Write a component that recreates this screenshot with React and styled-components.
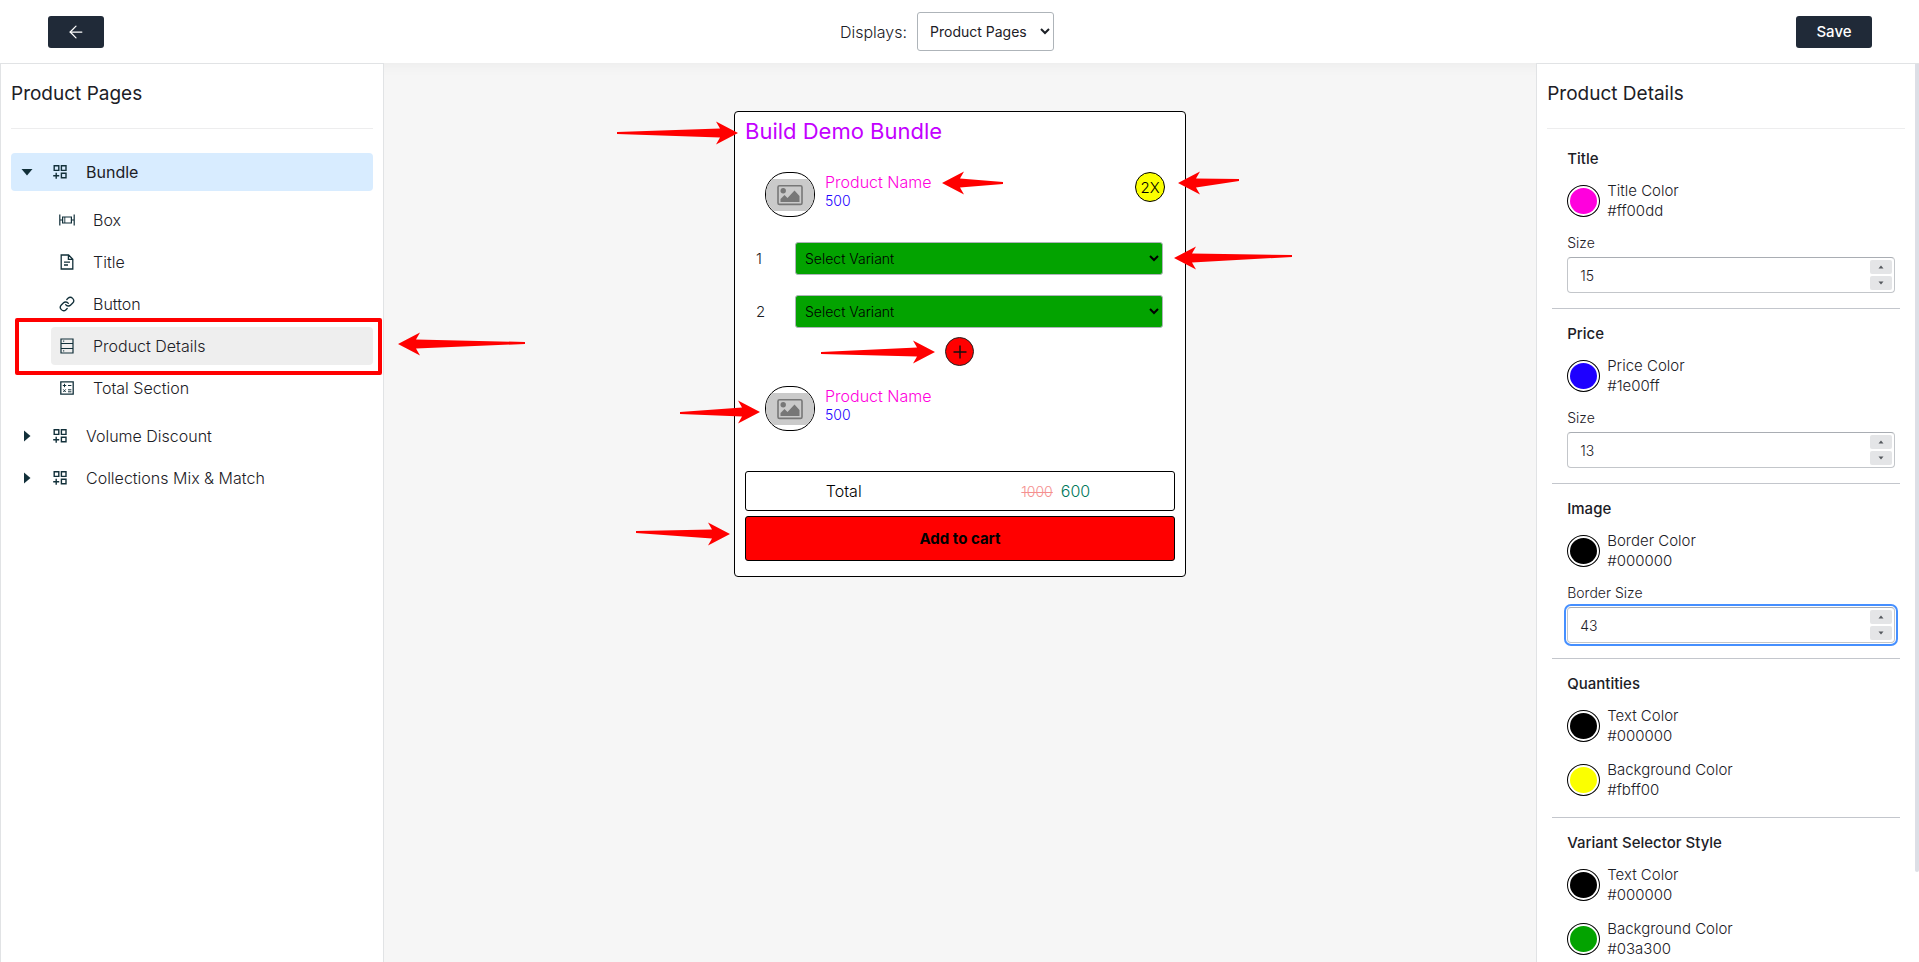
import React, { useId, useState } from "react";
import styled, { createGlobalStyle, css } from "styled-components";
import { ArrowLeft, Link as LinkIcon } from "lucide-react";

const ink = "#202a38";
const textInk = "#1c2026";
const iconInk = "#12303a";
const line = "#e1e3e5";
const red = "#ff0000";

const GlobalStyle = createGlobalStyle`
  *, *::before, *::after { box-sizing: border-box; }
  body {
    margin: 0;
    background: #f6f6f6;
    color: ${textInk};
    font-family: Inter, "Open Sans", sans-serif;
    font-size: 15px;
    font-weight: 300;
  }
  button, input, select { font: inherit; color: inherit; }
  h1, h2, h3, p, ul { margin: 0; padding: 0; }
  ul { list-style: none; }
`;

const Page = styled.div`
  display: flex;
  flex-direction: column;
  height: 100vh;
`;

const TopBar = styled.header`
  position: relative;
  display: flex;
  align-items: center;
  justify-content: space-between;
  padding: 12px 47px 12px 48px;
  background: #fff;
  box-shadow: 0 0 16px rgba(0, 0, 0, 0.06);
`;

const DarkButton = styled.button`
  display: flex;
  align-items: center;
  justify-content: center;
  width: ${(p) => (p.$wide ? "76px" : "56px")};
  height: 32px;
  padding: 0;
  border: 0;
  border-radius: 3px;
  background: ${ink};
  color: #fff;
  font-size: 15px;
  font-weight: 500;
`;

const DisplayPicker = styled.div`
  display: flex;
  align-items: center;
  gap: 10px;
  margin-right: 6px;
  font-size: 16px;
`;

const DisplaySelect = styled.select`
  width: 137px;
  height: 39px;
  padding: 0 0 0 8px;
  border: 1px solid #aeb4b9;
  border-radius: 3px;
  background: #fff;
  font-size: 14px;
  font-weight: 400;
`;

const Workspace = styled.div`
  position: relative;
  flex: 1;
  min-height: 0;
  display: grid;
  grid-template-columns: 20% 1fr calc(20% - 1px);
`;

const Panel = styled.aside`
  position: relative;
  min-height: 0;
  padding: 16px 10px 0;
  border: 1px solid ${line};
  border-bottom: 0;
  background: #fff;
`;

const SettingsPanel = styled(Panel)`
  display: flex;
  padding: 0;
  border-right: 0;
`;

const SettingsScroll = styled.div`
  flex: 1;
  overflow-y: auto;
  padding: 16px 10px 100px;
  scrollbar-width: none;
`;

const ScrollThumb = styled.div`
  flex: none;
  width: 4px;
  height: 90%;
  border-radius: 0 0 2px 2px;
  background: #dddfe6;
`;

const PanelTitle = styled.h2`
  padding-bottom: 20px;
  border-bottom: 1px solid #ededee;
  font-size: 19px;
  font-weight: 400;
  line-height: 28px;
`;

const NavList = styled.ul`
  display: flex;
  flex-direction: column;
  gap: 4px;
  padding-top: 24px;
`;

const SubList = styled.ul`
  display: flex;
  flex-direction: column;
  gap: 4px;
  padding: 10px 0 6px 40px;
`;

const NavItem = styled.li`
  position: relative;
`;

const NavButton = styled.button`
  display: flex;
  align-items: center;
  width: 100%;
  height: 38px;
  padding: 0 0 0 ${(p) => (p.$sub ? "8px" : "9px")};
  border: 0;
  border-radius: 4px;
  background: ${(p) => p.$fill || "transparent"};
  font-size: 16px;
  font-weight: ${(p) => (p.$strong ? 400 : 300)};
  text-align: left;
`;

const IconSlot = styled.span`
  display: flex;
  align-items: center;
  justify-content: center;
  width: ${(p) => p.$width};
  margin-right: ${(p) => p.$after};
  color: ${iconInk};
`;

const Highlight = styled.div`
  position: absolute;
  inset: -9px -9px -10px -36px;
  border: 4px solid ${red};
  border-radius: 2px;
  pointer-events: none;
`;

const Canvas = styled.main`
  display: flex;
  justify-content: center;
  align-items: flex-start;
  padding-top: 48px;
`;

const Card = styled.section`
  position: relative;
  width: 452px;
  padding: 5px 10px 15px;
  border: 1px solid #000;
  border-radius: 4px;
  background: #fff;
`;

const CardTitle = styled.h1`
  position: relative;
  color: #c300ff;
  font-size: 22px;
  font-weight: 400;
  line-height: 28px;
`;

const ProductRow = styled.div`
  position: relative;
  display: flex;
  align-items: flex-start;
  gap: 10px;
  padding: 0 10px 0 20px;
  margin-top: ${(p) => p.$gap};
`;

const Thumb = styled.div`
  display: flex;
  align-items: center;
  width: 50px;
  height: 45px;
  overflow: hidden;
  border: 1px solid #000;
  border-radius: 22px;
  background: #fff;
`;

const ProductText = styled.div`
  flex: 1;
  color: #ff00dd;
  font-size: 16px;
  line-height: 20px;
`;

const ProductName = styled.span`
  position: relative;
`;

const Price = styled.p`
  color: #1e00ff;
  font-size: 14px;
  line-height: 18px;
`;

const Quantity = styled.div`
  position: relative;
  display: flex;
  align-items: center;
  justify-content: center;
  width: 30px;
  height: 30px;
  border: 1px solid #000;
  border-radius: 50%;
  background: #fbff00;
  color: #000;
  font-size: 15px;
`;

const VariantList = styled.div`
  display: flex;
  flex-direction: column;
  gap: 20px;
  padding: 25px 12px 9px 11px;
`;

const VariantRow = styled.div`
  position: relative;
  display: flex;
  align-items: center;
`;

const VariantLabel = styled.label`
  width: 39px;
`;

const VariantSelect = styled.select`
  flex: 1;
  height: 33px;
  padding: 0 0 0 5px;
  border: 1px solid #aeb4b9;
  border-radius: 3px;
  background: #03a300;
  color: #000;
  font-size: 14px;
`;

const PlusRow = styled.div`
  display: flex;
  justify-content: center;
  padding-right: 1px;
`;

const PlusBadge = styled.div`
  position: relative;
  display: flex;
  align-items: center;
  justify-content: center;
  width: 29px;
  height: 29px;
  border: 1px solid #222;
  border-radius: 50%;
  background: ${red};
`;

const TotalBox = styled.div`
  display: flex;
  align-items: center;
  justify-content: space-around;
  height: 40px;
  margin-top: 40px;
  border: 1px solid #000;
  border-radius: 3px;
  color: #000;
  font-size: 16px;
`;

const TotalPrices = styled.div`
  display: flex;
  align-items: center;
  gap: 8px;
  padding-right: 4px;
  color: #00795c;
`;

const OldPrice = styled.del`
  color: #f58f8f;
  font-size: 14px;
`;

const CartButton = styled.button`
  position: relative;
  display: block;
  width: 100%;
  height: 45px;
  margin-top: 5px;
  border: 1px solid #000;
  border-radius: 3px;
  background: ${red};
  color: #000;
  font-size: 15px;
  font-weight: 700;
`;

const Section = styled.section`
  display: flex;
  flex-direction: column;
  margin: 0 5px;
  padding: ${(p) => (p.$first ? "18px" : "13px")} 5px 15px 15px;
  border-bottom: 1px solid #c3c6cc;
`;

const SectionTitle = styled.h3`
  margin-bottom: 10px;
  font-size: 15px;
  font-weight: 500;
  line-height: 24px;
`;

const ColorField = styled.div`
  display: flex;
  align-items: center;
  gap: 7px;
  margin-bottom: 2px;

  & + & { margin-top: 12px; }
`;

const ColorLabel = styled.label`
  display: flex;
  flex-direction: column;
  font-size: 15px;
  line-height: 20px;
`;

const Swatch = styled.input`
  appearance: none;
  width: 33px;
  height: 32px;
  padding: 2px;
  border: 1px solid #000;
  border-radius: 50%;
  background: #fff;

  &::-webkit-color-swatch-wrapper { padding: 0; }
  &::-webkit-color-swatch { border: 0; border-radius: 50%; }
`;

const SizeLabel = styled.label`
  margin: 12px 0 6px;
  font-size: 14px;
  line-height: 16px;
`;

const NumberBox = styled.div`
  display: flex;
  align-items: center;
  height: 36px;
  padding: 0 2px 0 12px;
  border: 1px solid #c3c6ca;
  border-top-color: #a9adb3;
  border-radius: 4px;
  ${(p) =>
    p.$active &&
    css`
      outline: 2px solid #458fff;
      outline-offset: 1px;
    `}
`;

const NumberInput = styled.input`
  flex: 1;
  min-width: 0;
  padding: 0;
  border: 0;
  outline: 0;
  background: none;
  font-size: 14px;
  appearance: textfield;

  &::-webkit-inner-spin-button { appearance: none; margin: 0; }
`;

const Stepper = styled.div`
  display: flex;
  flex-direction: column;
  gap: 2px;
`;

const StepButton = styled.button`
  display: flex;
  align-items: center;
  justify-content: center;
  width: 22px;
  height: 14px;
  padding: 0;
  border: 0;
  border-radius: 2px;
  background: #e4e5e7;
`;

const PointerSvg = styled.svg`
  position: absolute;
  left: ${(p) => p.$left};
  top: ${(p) => p.$top};
  z-index: 2;
  pointer-events: none;
`;

/* Tapered arrow; `drop` is how far the tail sits below the tip. */
function Pointer({ length, left, top, drop = 0, toLeft = false }) {
  const tail = 12 + drop;
  const d = `M${length} 12 L${length - 22} 0.5 L${length - 18} 7.5 L0 ${tail - 1} V${tail + 1} L${length - 18} 16.5 L${length - 22} 23.5 Z`;
  return (
    <PointerSvg $left={left} $top={top} width={length} height="24" viewBox={`0 0 ${length} 24`} aria-hidden="true">
      <path d={d} fill={red} transform={toLeft ? `translate(${length} 0) scale(-1 1)` : undefined} />
    </PointerSvg>
  );
}

function CaretIcon({ open }) {
  return (
    <svg width="12" height="12" viewBox="0 0 12 12" fill="currentColor">
      <path d={open ? "M0.5 3h11L6 9.5z" : "M3 0.5v11L9.5 6z"} />
    </svg>
  );
}

function GridIcon() {
  return (
    <svg width="14" height="14" viewBox="0 0 14 14" fill="none" stroke="currentColor" strokeWidth="1.4">
      <path d="M1.2 0.8h4.6v4.6H1.2zM8.4 0.8H13v4.6H8.4zM8.4 8.2H13v4.6H8.4zM3.2 7.8v6M0.2 10.8h6" />
    </svg>
  );
}

function BoxIcon() {
  return (
    <svg width="16" height="12" viewBox="0 0 16 12" fill="none" stroke="currentColor">
      <path strokeWidth="1.2" d="M0.8 0.5v11M15.2 0.5v11M0.8 6H4M12 6h3.2" />
      <path strokeWidth="1.2" d="M3.6 3h8.8v6H3.6z" />
      <path d="M5.8 3v6" strokeWidth="0.9" />
    </svg>
  );
}

function DocIcon() {
  return (
    <svg width="14" height="16" viewBox="0 0 14 16" fill="none" stroke="currentColor" strokeWidth="1.3">
      <path d="M1.2 1h7.4l4.2 4.2V15H1.2zM8.4 1v4.4h4.4M4 8.2h6M4 11h4" />
    </svg>
  );
}

function RowsIcon() {
  return (
    <svg width="14" height="16" viewBox="0 0 14 16" fill="none" stroke="currentColor" strokeWidth="1.2">
      <path d="M1 1h12v14H1zM1 5.5h12M1 10.5h12" />
      <path d="M3.2 3.2h1M3.2 12.8h1" />
    </svg>
  );
}

function CalcIcon() {
  return (
    <svg width="14" height="14" viewBox="0 0 14 14" fill="none" stroke="currentColor">
      <path strokeWidth="1.3" d="M0.8 0.8h12.4v12.4H0.8z" />
      <path d="M2.8 4.5h3.4M4.5 2.8v3.4M8 4.5h3.4M3.3 8.4l2.4 2.6M5.7 8.4L3.3 11M8 8.8h3.4M8 10.8h3.4" />
    </svg>
  );
}

function ImageIcon() {
  return (
    <svg width="48" height="32" viewBox="0 0 48 32">
      <path fill="#cacaca" d="M0 0h48v32H0z" />
      <rect x="12" y="6.8" width="24" height="18.6" rx="1.5" fill="none" stroke="#777" strokeWidth="1.6" />
      <circle cx="17.2" cy="11.8" r="2.7" fill="#777" />
      <path fill="#777" d="M14.5 23v-3l4-4 3 3 7-7.4 5 5.4v6z" />
    </svg>
  );
}

function PlusIcon() {
  return (
    <svg width="14" height="14" viewBox="0 0 14 14" stroke="#111" strokeWidth="1.4">
      <path d="M7 0.5v13M0.5 7h13" />
    </svg>
  );
}

function StepIcon({ down }) {
  return (
    <svg width="6" height="4" viewBox="0 0 6 4" fill="#55595e">
      <path d={down ? "M0.5 0.5h5L3 3.5z" : "M0.5 3.5h5L3 0.5z"} />
    </svg>
  );
}

function Product({ gap, quantity, nameArrow, imageArrow }) {
  return (
    <ProductRow $gap={gap}>
      <Thumb><ImageIcon /></Thumb>
      <ProductText>
        <ProductName>
          Product Name
          {nameArrow && <Pointer length={61} left="calc(100% + 11px)" top="-1px" toLeft />}
        </ProductName>
        <Price>500</Price>
      </ProductText>
      {quantity && (
        <Quantity>
          {quantity}
          <Pointer length={61} left="42px" top="-2px" drop={-3} toLeft />
        </Quantity>
      )}
      {imageArrow && <Pointer length={80} left="-65px" top="14px" drop={1} />}
    </ProductRow>
  );
}

function Variant({ number, arrow }) {
  const id = useId();
  return (
    <VariantRow>
      <VariantLabel htmlFor={id}>{number}</VariantLabel>
      <VariantSelect id={id}><option>Select Variant</option></VariantSelect>
      {arrow && <Pointer length={118} left="calc(100% + 11px)" top="4px" drop={-2} toLeft />}
    </VariantRow>
  );
}

function ColorSetting({ label, value }) {
  const id = useId();
  const [color, setColor] = useState(value);
  return (
    <ColorField>
      <Swatch id={id} type="color" value={color} onChange={(e) => setColor(e.target.value)} />
      <ColorLabel htmlFor={id}>
        <span>{label}</span>
        <span>{color}</span>
      </ColorLabel>
    </ColorField>
  );
}

function SizeSetting({ label, value, active }) {
  const id = useId();
  const [size, setSize] = useState(value);
  return (
    <>
      <SizeLabel htmlFor={id}>{label}</SizeLabel>
      <NumberBox $active={active}>
        <NumberInput id={id} type="number" value={size} onChange={(e) => setSize(Number(e.target.value))} />
        <Stepper>
          <StepButton type="button" aria-label="Increase" onClick={() => setSize(size + 1)}><StepIcon /></StepButton>
          <StepButton type="button" aria-label="Decrease" onClick={() => setSize(size - 1)}><StepIcon down /></StepButton>
        </Stepper>
      </NumberBox>
    </>
  );
}

function GroupItem({ label, open, children }) {
  return (
    <NavItem>
      <NavButton type="button" $fill={open && "#d8ecff"} $strong={open} aria-expanded={!!open}>
        <IconSlot $width="14px" $after="19px"><CaretIcon open={open} /></IconSlot>
        <IconSlot $width="14px" $after="19px"><GridIcon /></IconSlot>
        {label}
      </NavButton>
      {children}
    </NavItem>
  );
}

function SubItem({ label, icon, selected }) {
  return (
    <NavItem>
      <NavButton type="button" $sub $fill={selected && "#eeeeee"}>
        <IconSlot $width="16px" $after="18px">{icon}</IconSlot>
        {label}
      </NavButton>
      {selected && (
        <>
          <Highlight />
          <Pointer length={127} left="calc(100% + 25px)" top="5px" drop={-1} toLeft />
        </>
      )}
    </NavItem>
  );
}

const sections = [
  { title: "Title", colors: [["Title Color", "#ff00dd"]], size: ["Size", 15] },
  { title: "Price", colors: [["Price Color", "#1e00ff"]], size: ["Size", 13] },
  { title: "Image", colors: [["Border Color", "#000000"]], size: ["Border Size", 43], active: true },
  { title: "Quantities", colors: [["Text Color", "#000000"], ["Background Color", "#fbff00"]] },
  { title: "Variant Selector Style", colors: [["Text Color", "#000000"], ["Background Color", "#03a300"]] },
];

export default function App() {
  return (
    <Page>
      <GlobalStyle />
      <TopBar>
        <DarkButton type="button" aria-label="Back"><ArrowLeft size={20} strokeWidth={1.5} /></DarkButton>
        <DisplayPicker>
          <label htmlFor="displays">Displays:</label>
          <DisplaySelect id="displays"><option>Product Pages</option></DisplaySelect>
        </DisplayPicker>
        <DarkButton type="button" $wide>Save</DarkButton>
      </TopBar>
      <Workspace>
        <Panel>
          <PanelTitle>Product Pages</PanelTitle>
          <NavList>
            <GroupItem label="Bundle" open>
              <SubList>
                <SubItem label="Box" icon={<BoxIcon />} />
                <SubItem label="Title" icon={<DocIcon />} />
                <SubItem label="Button" icon={<LinkIcon size={16} strokeWidth={2} />} />
                <SubItem label="Product Details" icon={<RowsIcon />} selected />
                <SubItem label="Total Section" icon={<CalcIcon />} />
              </SubList>
            </GroupItem>
            <GroupItem label="Volume Discount" />
            <GroupItem label="Collections Mix & Match" />
          </NavList>
        </Panel>
        <Canvas>
          <Card>
            <CardTitle>
              Build Demo Bundle
              <Pointer length={121} left="-128px" top="4px" />
            </CardTitle>
            <Product gap="27px" quantity="2X" nameArrow />
            <VariantList>
              <Variant number="1" arrow />
              <Variant number="2" />
            </VariantList>
            <PlusRow>
              <PlusBadge>
                <PlusIcon />
                <Pointer length={114} left="-125px" top="2px" drop={1} />
              </PlusBadge>
            </PlusRow>
            <Product gap="20px" imageArrow />
            <TotalBox>
              <span>Total</span>
              <TotalPrices><OldPrice>1000</OldPrice>600</TotalPrices>
            </TotalBox>
            <CartButton type="button">
              Add to cart
              <Pointer length={94} left="-110px" top="5px" drop={-2} />
            </CartButton>
          </Card>
        </Canvas>
        <SettingsPanel>
          <SettingsScroll>
            <PanelTitle>Product Details</PanelTitle>
            {sections.map((s, i) => (
              <Section key={s.title} $first={i === 0}>
                <SectionTitle>{s.title}</SectionTitle>
                {s.colors.map(([label, value]) => (
                  <ColorSetting key={label} label={label} value={value} />
                ))}
                {s.size && <SizeSetting label={s.size[0]} value={s.size[1]} active={s.active} />}
              </Section>
            ))}
          </SettingsScroll>
          <ScrollThumb />
        </SettingsPanel>
      </Workspace>
    </Page>
  );
}
